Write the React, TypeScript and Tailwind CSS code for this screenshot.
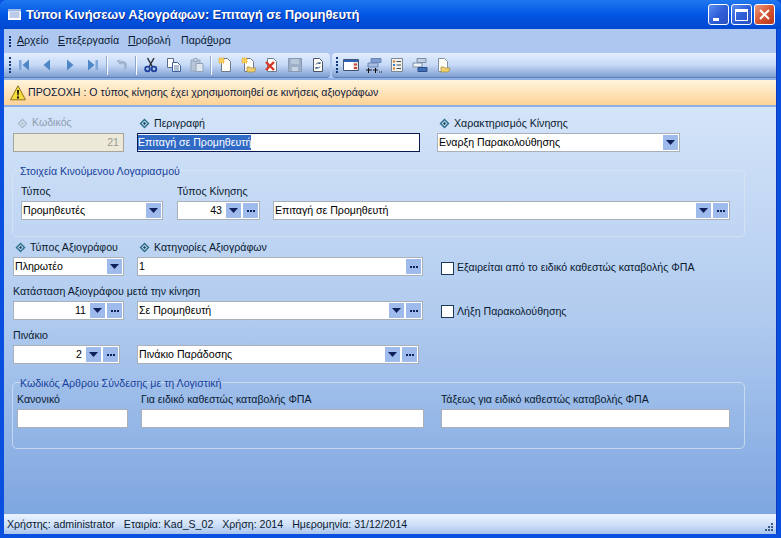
import type { ReactNode } from "react";

const Diamond = ({ dim }: { dim?: boolean }) => (
  <svg width="11" height="11" viewBox="0 0 11 11" className="shrink-0">
    <path d="M5.5 .5 10.5 5.5 5.5 10.5 .5 5.5Z" fill={dim ? "#a9bccf" : "#2f6f8f"} />
    <path d="M5.5 2.5 8.5 5.5 5.5 8.5 2.5 5.5Z" fill={dim ? "#dbe4ec" : "#b9d3e6"} />
    <path d="M5.5 4 7 5.5 5.5 7 4 5.5Z" fill={dim ? "#a9bccf" : "#16405e"} />
  </svg>
);

const DropBtn = () => (
  <span className="flex h-[15px] w-[15px] shrink-0 items-center justify-center bg-[#9fbbec]">
    <svg width="9" height="5" viewBox="0 0 9 5"><path d="M0 0h9L4.5 5Z" fill="#10205a" /></svg>
  </span>
);

const DotsBtn = () => (
  <span className="ml-[2px] flex h-[15px] w-[15px] shrink-0 items-center justify-center gap-[1px] bg-[#9fbbec]">
    <i className="h-[2px] w-[2px] bg-[#10205a]" />
    <i className="h-[2px] w-[2px] bg-[#10205a]" />
    <i className="h-[2px] w-[2px] bg-[#10205a]" />
  </span>
);

function Field({ w, value, right, drop, dots }: { w: string; value?: string; right?: boolean; drop?: boolean; dots?: boolean }) {
  return (
    <div className={`${w} flex h-[19px] shrink-0 items-center border border-[#a9b0b8] bg-white pr-px text-black`}>
      <span className={`min-w-0 flex-1 truncate pl-px ${right ? "pr-[4px] text-right" : ""}`}>{value}</span>
      {drop && <DropBtn />}
      {dots && <DotsBtn />}
    </div>
  );
}

const Label = ({ children, req, cls = "" }: { children: ReactNode; req?: boolean; cls?: string }) => (
  <div className={`flex h-[14px] shrink-0 items-center gap-[4px] whitespace-nowrap leading-[14px] text-[#0a1a30] ${cls}`}>
    {req && <Diamond />}
    {children}
  </div>
);

const Group = ({ title, cls, children }: { title: string; cls: string; children: ReactNode }) => (
  <div className={`relative -ml-px rounded-[5px] border border-[#dbe5f1]/70 ${cls}`}>
    <span className="absolute left-[6px] top-[-7px] whitespace-nowrap px-px leading-[14px] text-[#15409c]">{title}</span>
    {children}
  </div>
);

const Check = () => <span className="h-[13px] w-[13px] shrink-0 border border-[#1c3a58] bg-white" />;

const Sep = () => <span className="mx-[2px] h-[19px] w-[2px] shrink-0 border-r border-white bg-[#8ea8cc]" />;

const Grip = ({ dots = 5, h = "h-[16px]" }: { dots?: number; h?: string }) => (
  <span className={`flex w-[3px] shrink-0 flex-col justify-between ${h}`}>
    {Array.from({ length: dots }).map((_, i) => <i key={i} className="h-[2px] w-[2px] bg-[#123a7a]" />)}
  </span>
);

const Tool = ({ children }: { children: ReactNode }) => (
  <span className="flex h-[22px] w-[23px] shrink-0 items-center justify-center">{children}</span>
);

const Svg = ({ children }: { children: ReactNode }) => (
  <svg width="16" height="16" viewBox="0 0 16 16">{children}</svg>
);

const Doc = ({ fill = "#fffef6", stroke = "#6d7a8c" }: { fill?: string; stroke?: string }) => (
  <path d="M3.5 1.5h6l3 3v10h-9Z" fill={fill} stroke={stroke} />
);
const Star = () => <path d="M1 1h5v5H1Z" fill="#f4cf5a" stroke="#e8a13a" strokeDasharray="1 1" />;
const Folder = () => <path d="M6 10h3l1 1h5l-1.5 4H6Z" fill="#f2cf6b" stroke="#a58a3a" strokeWidth=".7" />;
const NavBlue = "#4f86c6";

const icons = {
  first: <Svg><path d="M3 3h2.500v10H3Z" fill="#7fa6d8" /><path d="M13 2.500v11L6.500 8Z" fill={NavBlue} /></Svg>,
  prev: <Svg><path d="M11 2.500v11L4.500 8Z" fill={NavBlue} /></Svg>,
  next: <Svg><path d="M5 2.500v11L11.500 8Z" fill={NavBlue} /></Svg>,
  last: <Svg><path d="M3 2.500v11L9.500 8Z" fill={NavBlue} /><path d="M10.500 3H13v10h-2.500Z" fill="#7fa6d8" /></Svg>,
  undo: <Svg><path d="M4 5.500C8 2.500 13 4 13 8.500 13 10.500 12 12 10 14 10.500 11 11 7.500 8 6.500L6 8 2.500 3.500 7.500 2.500Z" fill="#9fb2cc" /></Svg>,
  cut: (
    <Svg>
      <path d="M4.500 1l5 9M11 1l-5 9" stroke="#2b2f38" strokeWidth="1.500" />
      <circle cx="4.500" cy="12" r="2.300" fill="none" stroke="#1d3f9c" strokeWidth="1.800" />
      <circle cx="11" cy="12" r="2.300" fill="none" stroke="#1d3f9c" strokeWidth="1.800" />
    </Svg>
  ),
  copy: (
    <Svg>
      <path d="M1.500 1.500h6v9h-6Z" fill="#fff" stroke="#5e6b82" />
      <path d="M6.500 5.500h5l3 3v6h-8Z" fill="#fff" stroke="#3c5f9c" />
      <path d="M8 9h5M8 11h5M8 13h5" stroke="#3c5f9c" strokeWidth=".8" />
    </Svg>
  ),
  paste: (
    <Svg>
      <path d="M2 3h9v11H2Z" fill="#b9c6d8" stroke="#93a3b8" />
      <path d="M5 1.500h3v3H5Z" fill="#dbe3ec" stroke="#93a3b8" />
      <path d="M7 6.500h7v8H7Z" fill="#dfe7f0" stroke="#93a3b8" />
    </Svg>
  ),
  add: <Svg><Doc /><Star /></Svg>,
  addOpen: <Svg><Doc /><Star /><Folder /></Svg>,
  del: <Svg><Doc /><path d="M2 5l8 8M10 5l-8 8" stroke="#d8342a" strokeWidth="2.400" /></Svg>,
  save: <Svg><path d="M1.500 1.500h13v13h-13Z" fill="#9eb0c8" stroke="#8799b3" /><path d="M4 2h8v5H4Z" fill="#b9c7da" /><path d="M5 10h6v4H5Z" fill="#c9d4e3" /></Svg>,
  refresh: (
    <Svg>
      <Doc stroke="#4a5568" />
      <path d="M6 7.500a2.500 2.500 0 0 1 4-1M10 9.500a2.500 2.500 0 0 1-4 1" fill="none" stroke="#31517f" />
      <path d="M10.500 4.500v2.500H8ZM5.500 12.500V10H8Z" fill="#31517f" />
    </Svg>
  ),
  win: (
    <Svg>
      <path d="M.5 2.500h15v11H.5Z" fill="#fff" stroke="#40557a" />
      <path d="M1 3h14v2H1Z" fill="#2b62b8" />
      <path d="M10 5h5v8h-5Z" fill="#e9e3d8" />
      <path d="M11 6.500h3v2h-3Z" fill="#c8433a" /><path d="M11 10h3v2h-3Z" fill="#c8433a" />
    </Svg>
  ),
  fields: (
    <Svg>
      <path d="M5 1.500h10v4H5Z" fill="#7f9dd0" stroke="#6a86b6" />
      <path d="M2 6h10v4H2Z" fill="#a9bde0" stroke="#6a86b6" />
      <path d="M0 13h6M2.500 11v5M7 13h5M9.500 11v5" stroke="#111" />
      <path d="M13 15h1M15 15h1" stroke="#111" />
    </Svg>
  ),
  list: (
    <Svg>
      <path d="M2.500 1.500h11v13h-11Z" fill="#f3f1e6" stroke="#7c8798" />
      <path d="M4 3.500h2v2H4Z" fill="#d8762c" /><path d="M4 7h2v2H4Z" fill="#3c78c0" /><path d="M4 10.500h2v2H4Z" fill="#d8762c" />
      <path d="M7.500 4.500H12M7.500 8H12M7.500 11.500H12" stroke="#3b4a63" />
    </Svg>
  ),
  link: (
    <Svg>
      <path d="M5 1.500h9v4H5Z" fill="#c3cfdf" stroke="#7f8ea5" />
      <path d="M1 6h9v4H1Z" fill="#eef2f7" stroke="#7f8ea5" />
      <path d="M6 10.500h9v4H6Z" fill="#3f6fb8" stroke="#2c4f88" />
    </Svg>
  ),
  openDoc: <Svg><Doc stroke="#8391a5" /><Folder /></Svg>,
};

const Ctrl = ({ children, red }: { children: ReactNode; red?: boolean }) => (
  <span className={`flex h-[21px] w-[21px] items-center justify-center rounded-[3px] border border-white ${red ? "bg-gradient-to-br from-[#e99a80] via-[#d8552f] to-[#b8361c]" : "bg-gradient-to-br from-[#5c8df0] via-[#2f5fd8] to-[#2a50c0]"}`}>
    {children}
  </span>
);

const WarnIcon = () => (
  <svg width="16" height="16" viewBox="0 0 16 16" className="shrink-0">
    <path d="M8 .8 15.500 14.800H.5Z" fill="#f8dc3c" stroke="#8a7420" />
    <path d="M7 5h2l-.4 5.500H7.400Z" fill="#111" />
    <path d="M7 11.500h2v2H7Z" fill="#111" />
  </svg>
);

const U = ({ children }: { children: ReactNode }) => <span className="underline">{children}</span>;

export default function App() {
  return (
    <div className="flex h-[538px] w-[781px] flex-col overflow-hidden bg-[#0a50e0] font-['Liberation_Sans','Noto_Sans',sans-serif] text-[10.6px]">
      <div className="flex h-[29px] shrink-0 items-center rounded-t-[6px] bg-gradient-to-b from-[#1f78f0] via-[#0456e4] to-[#0048d0] pl-[8px] pr-[6px]">
        <svg width="13" height="13" viewBox="0 0 13 13" className="shrink-0">
          <path d="M0 1h13v11H0Z" fill="#fff" />
          <path d="M0 1h13v2.500H0Z" fill="#9db8e8" />
          <path d="M1.500 5h10M1.500 7h10M1.500 9h10" stroke="#7a97cf" />
        </svg>
        <span className="ml-[5px] whitespace-nowrap text-[13px] font-bold tracking-[-0.1px] text-white [text-shadow:1px_1px_#0a2a90]">Τύποι Κινήσεων Αξιογράφων: Επιταγή σε Προμηθευτή</span>
        <div className="ml-auto flex items-center gap-[2px]">
          <Ctrl><i className="mt-[10px] mr-[6px] h-[3px] w-[6px] bg-white" /></Ctrl>
          <Ctrl><i className="h-[12px] w-[13px] border border-t-[3px] border-white" /></Ctrl>
          <Ctrl red>
            <svg width="11" height="11" viewBox="0 0 11 11"><path d="M1 1l9 9M10 1l-9 9" stroke="#fff" strokeWidth="2" /></svg>
          </Ctrl>
        </div>
      </div>

      <div className="mx-[4px] mb-[4px] flex min-h-0 flex-1 flex-col border-r border-[#0c3bc0]">
        <div className="flex h-[24px] shrink-0 items-center bg-[#adc7f0] pl-[5px] text-[#0a1a30]">
          <Grip dots={4} h="h-[11px]" />
          <span className="ml-[5px] w-[41px]"><U>Α</U>ρχείο</span>
          <span className="w-[70px]"><U>Ε</U>πεξεργασία</span>
          <span className="w-[53px]"><U>Π</U>ροβολή</span>
          <span>Παρά<U>θ</U>υρα</span>
        </div>

        <div className="flex h-[25px] shrink-0 gap-[2px] bg-[#adc7f0]">
          <div className="flex w-[326px] shrink-0 items-center rounded-r-[4px] border-b border-[#5f7fb8] bg-gradient-to-b from-[#e3eefe] via-[#c6d9f6] to-[#7f9fd2] pl-[5px]">
            <Grip />
            <Tool>{icons.first}</Tool>
            <Tool>{icons.prev}</Tool>
            <Tool>{icons.next}</Tool>
            <Tool>{icons.last}</Tool>
            <Sep />
            <Tool>{icons.undo}</Tool>
            <Sep />
            <Tool>{icons.cut}</Tool>
            <Tool>{icons.copy}</Tool>
            <Tool>{icons.paste}</Tool>
            <Sep />
            <Tool>{icons.add}</Tool>
            <Tool>{icons.addOpen}</Tool>
            <Tool>{icons.del}</Tool>
            <Tool>{icons.save}</Tool>
            <Tool>{icons.refresh}</Tool>
          </div>
          <div className="flex flex-1 items-center rounded-l-[4px] border-b border-[#5f7fb8] bg-gradient-to-b from-[#e3eefe] via-[#c6d9f6] to-[#7f9fd2] pl-[4px]">
            <Grip />
            <Tool>{icons.win}</Tool>
            <Tool>{icons.fields}</Tool>
            <Tool>{icons.list}</Tool>
            <Tool>{icons.link}</Tool>
            <Tool>{icons.openDoc}</Tool>
          </div>
        </div>

        <div className="flex h-[29px] shrink-0 items-center gap-[2px] border-y-2 border-[#8fb0e4] bg-gradient-to-b from-[#fff4dc] to-[#fdd296] pl-[6px] text-[#10203a]">
          <WarnIcon />
          <span className="whitespace-nowrap">ΠΡΟΣΟΧΗ : Ο τύπος κίνησης έχει χρησιμοποιηθεί σε κινήσεις αξιογράφων</span>
        </div>

        <div className="flex min-h-0 flex-1 flex-col bg-gradient-to-b from-[#d4e4f9] via-[#b2ccef] to-[#7ea6e0] pl-[9px]">
          <div className="mt-[9px] flex">
            <div className="w-[124px] shrink-0">
              <div className="flex h-[14px] items-center gap-[4px] pl-[4px] text-[#8f9db0]"><Diamond dim />Κωδικός</div>
              <div className="mt-[3px] h-[19px] w-[111px] border border-[#a6a69c] bg-[#ece9d8] pr-[4px] text-right leading-[17px] text-[#9a9a90]">21</div>
            </div>
            <div className="w-[300px] shrink-0">
              <Label req cls="pl-[2px]">Περιγραφή</Label>
              <div className="mt-[3px] flex h-[19px] w-[283px] items-center border border-[#0a1a50] bg-white"><span className="bg-[#316ac5] text-white">Επιταγή σε Προμηθευτή</span></div>
            </div>
            <div>
              <Label req cls="pl-[2px]">Χαρακτηρισμός Κίνησης</Label>
              <div className="mt-[3px]"><Field w="w-[243px]" value="Εναρξη Παρακολούθησης" drop /></div>
            </div>
          </div>

          <Group title="Στοιχεία Κινούμενου Λογαριασμού" cls="mt-[18px] h-[67px] w-[733px] pl-[8px]">
            <div className="mt-[13px] flex">
              <div className="w-[156px] shrink-0">
                <Label>Τύπος</Label>
                <div className="mt-[3px]"><Field w="w-[142px]" value="Προμηθευτές" drop /></div>
              </div>
              <div className="w-[96px] shrink-0">
                <Label>Τύπος Κίνησης</Label>
                <div className="mt-[3px]"><Field w="w-[83px]" value="43" right drop dots /></div>
              </div>
              <div className="mt-[17px]"><Field w="w-[457px]" value="Επιταγή σε Προμηθευτή" drop dots /></div>
            </div>
          </Group>

          <div className="mt-[3px] flex">
            <div className="w-[124px] shrink-0">
              <Label req cls="pl-[2px]">Τύπος Αξιογράφου</Label>
              <div className="mt-[3px]"><Field w="w-[111px]" value="Πληρωτέο" drop /></div>
            </div>
            <div className="w-[304px] shrink-0">
              <Label req cls="pl-[2px]">Κατηγορίες Αξιογράφων</Label>
              <div className="mt-[3px]"><Field w="w-[286px]" value="1" dots /></div>
            </div>
            <div className="mt-[20px] flex items-center gap-[3px] text-[#0a1a30]"><Check />Εξαιρείται από το ειδικό καθεστώς καταβολής ΦΠΑ</div>
          </div>

          <Label cls="mt-[8px]">Κατάσταση Αξιογράφου μετά την κίνηση</Label>
          <div className="mt-[3px] flex items-start">
            <div className="w-[124px] shrink-0"><Field w="w-[111px]" value="11" right drop dots /></div>
            <div className="w-[304px] shrink-0"><Field w="w-[286px]" value="Σε Προμηθευτή" drop dots /></div>
            <div className="mt-[3px] flex items-center gap-[3px] text-[#0a1a30]"><Check />Λήξη Παρακολούθησης</div>
          </div>

          <Label cls="mt-[8px]">Πινάκιο</Label>
          <div className="mt-[3px] flex items-start">
            <div className="w-[124px] shrink-0"><Field w="w-[107px]" value="2" right drop dots /></div>
            <Field w="w-[282px]" value="Πινάκιο Παράδοσης" drop dots />
          </div>

          <Group title="Κωδικός Αρθρου Σύνδεσης με τη Λογιστική" cls="mt-[18px] h-[67px] w-[733px] pl-[4px]">
            <div className="mt-[9px] flex">
              <div className="w-[124px] shrink-0">
                <Label>Κανονικό</Label>
                <div className="mt-[3px]"><Field w="w-[111px]" /></div>
              </div>
              <div className="w-[300px] shrink-0">
                <Label>Για ειδικό καθεστώς καταβολής ΦΠΑ</Label>
                <div className="mt-[3px]"><Field w="w-[283px]" /></div>
              </div>
              <div>
                <Label>Τάξεως για ειδικό καθεστώς καταβολής ΦΠΑ</Label>
                <div className="mt-[3px]"><Field w="w-[289px]" /></div>
              </div>
            </div>
          </Group>
        </div>

        <div className="flex h-[20px] shrink-0 items-center gap-[9px] border-t border-[#e8f0fb] bg-gradient-to-b from-[#eaf2fe] via-[#cfe0f8] to-[#a9c4ec] pl-[3px] pr-[3px] text-[#0a1a30]">
          <span>Χρήστης: administrator</span>
          <span>Εταιρία: Kad_S_02</span>
          <span>Χρήση: 2014</span>
          <span>Ημερομηνία: 31/12/2014</span>
          <svg width="10" height="10" viewBox="0 0 10 10" className="ml-auto mt-[6px] shrink-0">
            <path d="M8 0h2v2H8ZM5 3h2v2H5ZM8 3h2v2H8ZM2 6h2v2H2ZM5 6h2v2H5ZM8 6h2v2H8Z" fill="#3a5a8a" />
          </svg>
        </div>
      </div>
    </div>
  );
}
